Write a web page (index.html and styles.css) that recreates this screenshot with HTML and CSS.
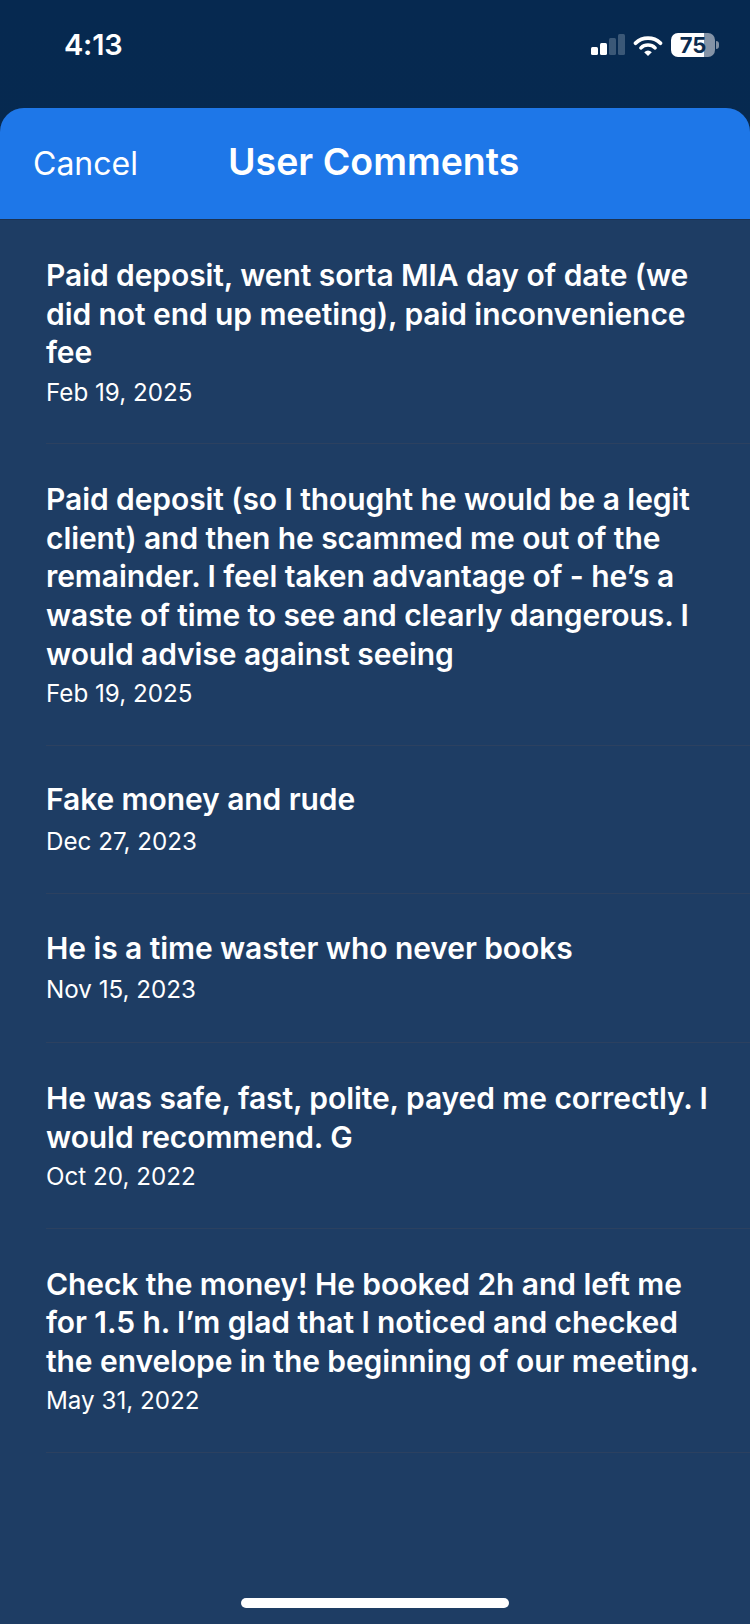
FILE: index.html
```html
<!DOCTYPE html>
<html lang="en">
<head>
  <meta charset="UTF-8" />
  <title>User Comments</title>
  <link rel="stylesheet" href="styles.css">
</head>
<body>
  <div class="statusbar">
    <span class="time">4:13</span>
    <div class="status-icons">
      <svg class="signal" width="34" height="21" viewBox="0 0 34 21">
        <rect x="0" y="13" width="7" height="8" rx="1.5" fill="#fff"/>
        <rect x="9" y="9" width="7" height="12" rx="1.5" fill="#fff"/>
        <rect x="18" y="4" width="7" height="17" rx="1.5" fill="#3b5877"/>
        <rect x="27" y="0" width="7" height="21" rx="1.5" fill="#3b5877"/>
      </svg>
      <svg class="wifi" width="30" height="21" viewBox="0 0 30 22">
        <path d="M2 8.5 A19 19 0 0 1 28 8.5" fill="none" stroke="#fff" stroke-width="4" stroke-linecap="round"/>
        <path d="M7.5 13.5 A11 11 0 0 1 22.500 13.500" fill="none" stroke="#fff" stroke-width="3.600" stroke-linecap="round"/>
        <path d="M11 18 L15 22 L19 18 A6 6 0 0 0 11 18 Z" fill="#fff"/>
      </svg>
      <div class="battery">
        <div class="battery-body"><span class="battery-level">75</span></div>
        <div class="battery-tip"></div>
      </div>
    </div>
  </div>

  <div class="sheet">
    <div class="header">
      <span class="cancel">Cancel</span>
      <span class="title">User Comments</span>
    </div>
    <div class="comments">
      <div class="comment">
        <p class="text">Paid deposit, went sorta MIA day of date (we<br>did not end up meeting), paid inconvenience<br>fee</p>
        <p class="date">Feb 19, 2025</p>
      </div>
      <div class="comment">
        <p class="text">Paid deposit (so I thought he would be a legit<br>client) and then he scammed me out of the<br>remainder. I feel taken advantage of - he’s a<br>waste of time to see and clearly dangerous. I<br>would advise against seeing</p>
        <p class="date">Feb 19, 2025</p>
      </div>
      <div class="comment single">
        <p class="text">Fake money and rude</p>
        <p class="date">Dec 27, 2023</p>
      </div>
      <div class="comment single">
        <p class="text">He is a time waster who never books</p>
        <p class="date">Nov 15, 2023</p>
      </div>
      <div class="comment">
        <p class="text">He was safe, fast, polite, payed me correctly. I<br>would recommend. G</p>
        <p class="date">Oct 20, 2022</p>
      </div>
      <div class="comment">
        <p class="text">Check the money! He booked 2h and left me<br>for 1.5 h. I’m glad that I noticed and checked<br>the envelope in the beginning of our meeting.</p>
        <p class="date">May 31, 2022</p>
      </div>
    </div>
    <div class="home-bar"></div>
  </div>
</body>
</html>
```

FILE: styles.css
```css
html, body {
  margin: 0;
  height: 1624px;
  overflow: hidden;
}
body {
  font-family: Inter, "Liberation Sans", sans-serif;
  color: #fff;
  background: linear-gradient(#062950, #062c4f);
  display: flex;
  flex-direction: column;
}
.statusbar {
  height: 108px;
  display: flex;
  justify-content: space-between;
  padding: 28px 31px 0 64px;
  box-sizing: border-box;
}
.time {
  font-size: 29px;
  font-weight: 600;
  letter-spacing: -0.2px;
  line-height: 34px;
}
.status-icons {
  display: flex;
  align-items: flex-start;
  height: 26px;
  gap: 8px;
  margin-top: 5px;
}
.signal {
  margin-top: 1px;
}
.wifi {
  margin-top: 2px;
}
.battery {
  display: flex;
  align-items: center;
  gap: 1px;
}
.battery-body {
  width: 44px;
  height: 24px;
  border-radius: 7px;
  overflow: hidden;
  background: linear-gradient(90deg, #fff 75%, #8493a6 75%);
}
.battery-level {
  display: block;
  text-align: center;
  font-size: 22px;
  font-weight: 700;
  line-height: 24px;
  color: #0b2c50;
}
.battery-tip {
  width: 3px;
  height: 8px;
  background: #7f8fa3;
  border-radius: 0 3px 3px 0;
}
.sheet {
  flex: 1;
  background: #1e3d64;
  border-radius: 24px 24px 0 0;
  overflow: hidden;
  display: flex;
  flex-direction: column;
}
.header {
  height: 112px;
  background: #1e77e8;
  border-bottom: 1px solid #1b3252;
  box-sizing: border-box;
  display: flex;
  align-items: baseline;
  padding: 32px 0 0 33px;
  line-height: 44px;
}
.cancel {
  font-size: 32px;
  font-weight: 400;
  width: 195px;
}
.title {
  font-size: 37.5px;
  font-weight: 600;
}
.comments {
  flex: 1;
  padding-left: 46px;
}
.comment {
  padding: 36px 20px 35.5px 0;
  border-bottom: 1px solid #2c4160;
}
.single {
  padding-top: 34.5px;
  padding-bottom: 36.5px;
}
.text {
  margin: 0;
  font-size: 30px;
  font-weight: 600;
  letter-spacing: -0.08px;
  line-height: 38.6px;
}
.date {
  margin: 6px 0 0;
  font-size: 24.2px;
  font-weight: 400;
  line-height: 30px;
}
.single .date {
  margin-top: 8px;
}
.home-bar {
  width: 268px;
  height: 10px;
  background: #fff;
  border-radius: 5px;
  margin: 0 auto 16px;
}
```
